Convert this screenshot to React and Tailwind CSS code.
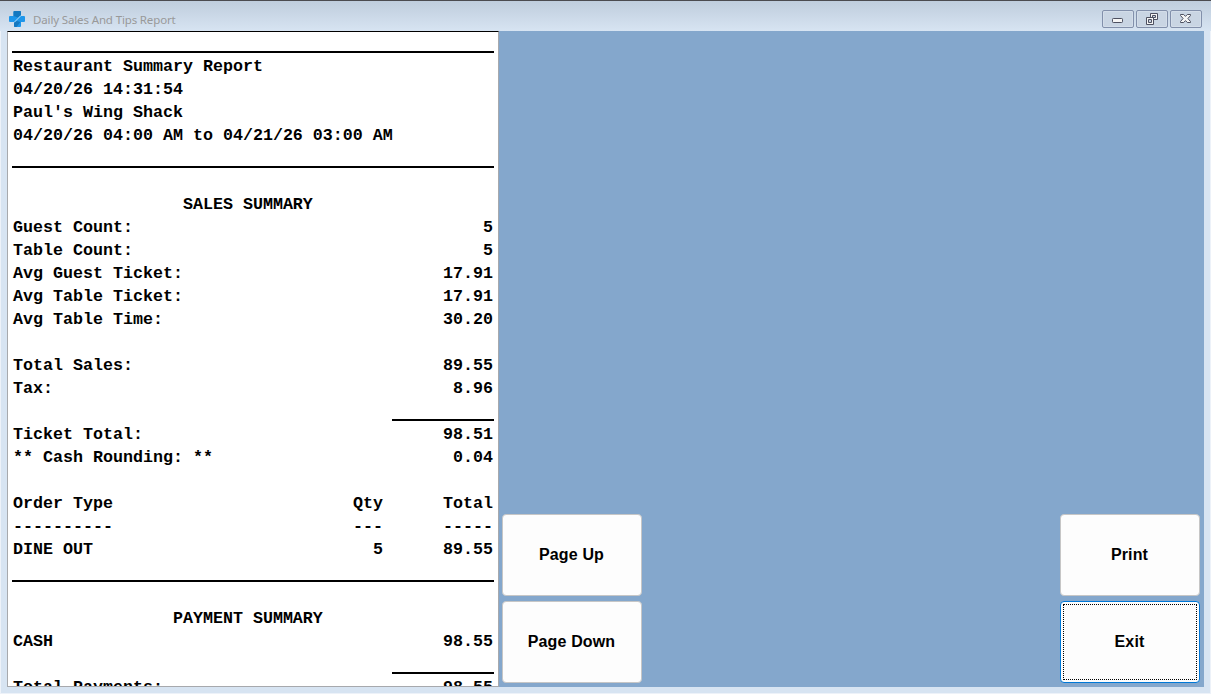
import React from 'react';
import clsx from 'clsx';

const reportRows = [
  { rule: 'full' },
  { left: 'Restaurant Summary Report' },
  { left: '04/20/26 14:31:54' },
  { left: "Paul's Wing Shack" },
  { left: '04/20/26 04:00 AM to 04/21/26 03:00 AM' },
  { rule: 'full' },
  {},
  { left: '                 SALES SUMMARY' },
  { left: 'Guest Count:', right: '5' },
  { left: 'Table Count:', right: '5' },
  { left: 'Avg Guest Ticket:', right: '17.91' },
  { left: 'Avg Table Ticket:', right: '17.91' },
  { left: 'Avg Table Time:', right: '30.20' },
  {},
  { left: 'Total Sales:', right: '89.55' },
  { left: 'Tax:', right: '8.96' },
  { rule: 'total' },
  { left: 'Ticket Total:', right: '98.51' },
  { left: '** Cash Rounding: **', right: '0.04' },
  {},
  { left: 'Order Type', right: 'Qty      Total' },
  { left: '----------', right: '---      -----' },
  { left: 'DINE OUT', right: '5      89.55' },
  { rule: 'full' },
  {},
  { left: '                PAYMENT SUMMARY' },
  { left: 'CASH', right: '98.55' },
  { rule: 'total' },
  { left: 'Total Payments:', right: '98.55' },
];

const ReportRow = ({ left, right, rule }) => {
  if (rule) {
    return (
      <div className="h-[23px] shrink-0 flex items-end justify-end pb-0.5">
        <div className={clsx('h-0.5 bg-black -ml-px -mr-px', rule === 'full' ? 'w-[482px]' : 'w-[102px]')} />
      </div>
    );
  }

  return (
    <div className="h-[23px] shrink-0 flex justify-between whitespace-pre">
      <span>{left}</span>
      <span>{right}</span>
    </div>
  );
};

const AppIcon = () => (
  <svg width="16" height="16" viewBox="0 0 16 16" className="shrink-0">
    <path d="M5.5 0H11q1 0 1 1v4h3q1 0 1 1v4q0 1-1 1h-3v4q0 1-1 1H6q-1 0-1-1v-4H1q-1 0-1-1V6q0-1 1-1h3.5V1q0-1 1-1z" fill="#1e96ea" />
    <path d="M5.5 0H11q1 0 1 1v3L9 6.5 4.5 5V1q0-1 1-1z" fill="#1478c0" />
    <path d="M5 11l3-1 3.5 1-4 5H6q-1 0-1-1z" fill="#1478c0" />
    <path d="M5 11.5l7-7" stroke="#cfe6f8" strokeWidth="0.9" />
  </svg>
);

const MinimizeIcon = () => (
  <svg width="12" height="12" viewBox="0 0 12 12">
    <rect x="0.5" y="5.5" width="10" height="4" rx="0.8" fill="#f5f5f5" stroke="#4d5060" />
  </svg>
);

const RestoreIcon = () => (
  <svg width="12" height="12" viewBox="0 0 12 12">
    <path d="M4.5 0.5h7v6h-7z" fill="#f5f5f5" stroke="#4d5060" />
    <path d="M6.5 2.5h3v2h-3z" fill="#c7d2df" stroke="#4d5060" />
    <path d="M0.5 4.5h7v7h-7z" fill="#f5f5f5" stroke="#4d5060" />
    <path d="M2.5 6.5h3v3h-3z" fill="#c7d2df" stroke="#4d5060" />
  </svg>
);

const CloseIcon = () => (
  <svg width="12" height="12" viewBox="0 0 12 12">
    <path
      d="M0.5 1.5h3.2L5.5 3.4 7.3 1.5h3.2v1L7.9 5.5l2.6 3v1H7.3L5.5 7.6 3.7 9.5H0.5v-1l2.6-3-2.6-3z"
      fill="#f5f5f5"
      stroke="#4d5060"
    />
  </svg>
);

const CaptionButton = ({ label, children }) => (
  <button
    aria-label={label}
    className="w-8 h-[18px] flex items-center justify-center rounded-[2px] border border-[#8290ab] bg-[#c9d5e3] shadow-[inset_0_0_0_1px_#d3dde9]"
  >
    {children}
  </button>
);

const ActionButton = ({ children, focused }) => (
  <button
    className={clsx(
      'w-[140px] h-[82px] p-0.5 rounded-[4px] border bg-[#fdfdfd] text-base tracking-[0.15px] font-bold text-black',
      focused ? 'border-[#0078d7]' : 'border-[#c6c6c6]'
    )}
  >
    <span
      className={clsx(
        'w-full h-full flex items-center justify-center border pb-px pr-px',
        focused ? 'border-dotted border-black' : 'border-transparent'
      )}
    >
      {children}
    </span>
  </button>
);

const App = () => {
  return (
    <div className="w-[1211px] h-[694px] flex flex-col overflow-hidden bg-[#d7e4f2] border-t border-t-[#4b4b50] font-['Liberation_Sans',sans-serif]">
      {/* Title bar */}
      <div className="h-[30px] shrink-0 flex items-start justify-between pl-[9px] pr-[9px] bg-linear-to-b from-[#bfcddd] to-[#d7e4f2]">
        <div className="flex items-start gap-2 pt-2.5">
          <AppIcon />
          <span className="font-['Noto_Sans','Open_Sans',sans-serif] text-[11.5px] leading-[18px] tracking-[-0.14px] text-[#999999]">
            Daily Sales And Tips Report
          </span>
        </div>
        <div className="flex gap-0.5 pt-[9px]">
          <CaptionButton label="Minimize"><MinimizeIcon /></CaptionButton>
          <CaptionButton label="Restore"><RestoreIcon /></CaptionButton>
          <CaptionButton label="Close"><CloseIcon /></CaptionButton>
        </div>
      </div>

      {/* Client area */}
      <div className="h-[663px] flex border-x border-b border-[#edf2f9] pl-1.5 pr-1.5 pb-1.5">
        <div className="w-[492px] shrink-0 flex flex-col overflow-hidden bg-white border border-[#a7a9ad] border-t-black pl-[5px] pr-[5px] font-['Liberation_Mono',monospace] text-[16.67px] leading-[23px] font-bold text-black">
          {reportRows.map((row, i) => (
            <ReportRow key={i} {...row} />
          ))}
        </div>

        <div className="flex-1 flex items-end justify-between bg-[#84a7cc] pl-[3px] pr-1 pb-1">
          <div className="flex flex-col gap-[5px]">
            <ActionButton>Page Up</ActionButton>
            <ActionButton>Page Down</ActionButton>
          </div>
          <div className="flex flex-col gap-[5px]">
            <ActionButton>Print</ActionButton>
            <ActionButton focused>Exit</ActionButton>
          </div>
        </div>
      </div>
    </div>
  );
};

export default App;
